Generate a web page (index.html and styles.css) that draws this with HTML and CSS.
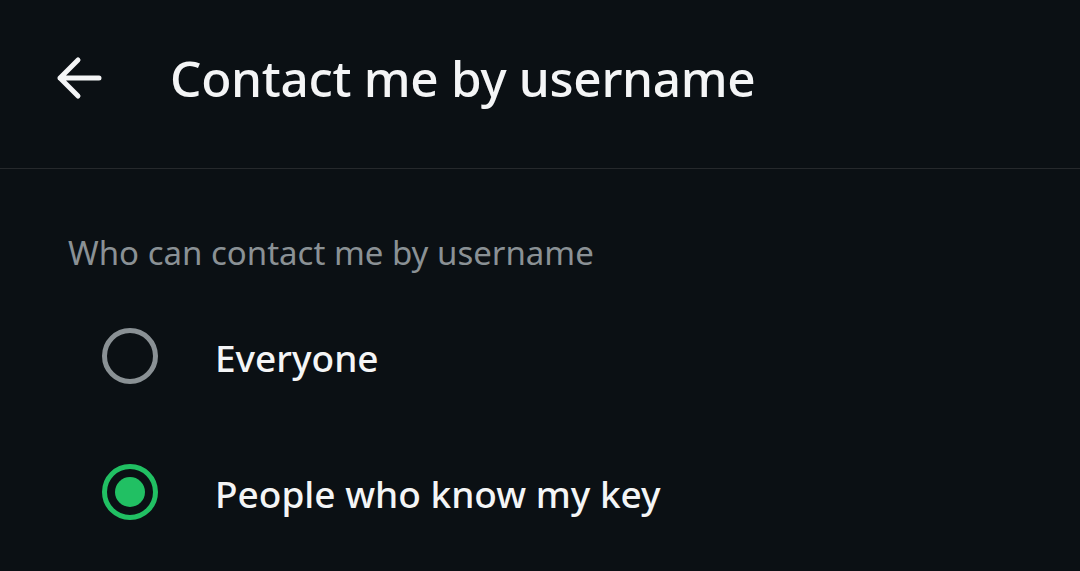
FILE: index.html
```html
<html lang="en"><head>
    <meta charset="UTF-8">
    <meta name="viewport" content="width=device-width, initial-scale=1.0">
    <title>Contact me by username</title>
    <link rel="stylesheet" href="styles.css">
</head>
<body>
    <div class="screen">
        <header class="top-bar">
            <button class="back-btn" aria-label="Back">
                <svg width="48" height="48" viewBox="0 0 48 48">
                    <path d="M44 24H5M23 6L5 24L23 42" fill="none" stroke="#f4f5f6" stroke-width="5" stroke-linecap="round" stroke-linejoin="round"/>
                </svg>
            </button>
            <h1 class="title">Contact me by username</h1>
        </header>

        <section class="options">
            <div class="section-label">Who can contact me by username</div>

            <label class="option">
                <span class="radio"></span>
                <span class="option-text">Everyone</span>
            </label>

            <label class="option">
                <span class="radio checked"></span>
                <span class="option-text">People who know my key</span>
            </label>
        </section>
    </div>
</body></html>
```

FILE: styles.css
```css
:root {
    --bg-color: #0b1014;
    --text-color: #f4f5f6;
    --muted-color: #8a9195;
    --divider-color: #26292c;
    --accent-color: #21c063;
}

body {
    margin: 0;
    background: var(--bg-color);
    color: var(--text-color);
    font-family: 'Noto Sans', Arial, sans-serif;
}

.screen {
    min-height: 100vh;
}

.top-bar {
    height: 169px;
    display: flex;
    align-items: center;
    border-bottom: 1px solid var(--divider-color);
    padding-left: 55px;
    box-sizing: border-box;
}

.back-btn {
    background: none;
    border: none;
    padding: 0;
    width: 48px;
    height: 48px;
    display: flex;
    margin-top: -12px;
}

.title {
    margin: -12px 0 0 67px;
    font-size: 49.5px;
    font-weight: 500;
    letter-spacing: -0.3px;
}

.options {
    padding: 63px 0 0 68px;
}

.section-label {
    font-size: 33px;
    color: var(--muted-color);
    line-height: 42px;
    margin-bottom: 14px;
}

.option {
    display: flex;
    align-items: center;
    height: 136px;
    padding-left: 34px;
}

.radio {
    width: 46px;
    height: 46px;
    border: 5px solid var(--muted-color);
    border-radius: 50%;
    display: flex;
    align-items: center;
    justify-content: center;
    flex-shrink: 0;
}

.radio.checked {
    border-color: var(--accent-color);
}

.radio.checked::after {
    content: "";
    width: 30px;
    height: 30px;
    border-radius: 50%;
    background: var(--accent-color);
}

.option-text {
    margin-left: 57px;
    font-size: 37px;
    font-weight: 500;
    margin-top: 2px;
}
```
